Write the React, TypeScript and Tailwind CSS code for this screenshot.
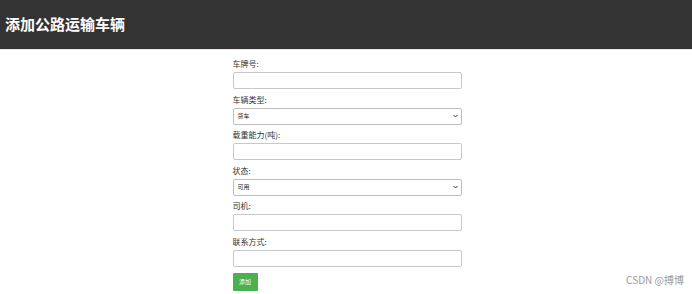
import React from "react";

const font = { fontFamily: '"Noto Sans CJK SC", "Noto Sans", sans-serif' };

function Label({ children }: { children: React.ReactNode }) {
  return (
    <div className="h-[10px] mb-[3px] text-[8px] leading-[10px] text-[#333]">{children}</div>
  );
}

function TextInput() {
  return (
    <input
      type="text"
      className="block w-full h-[17px] border border-[#c8c8c8] rounded-[2px] bg-white outline-none px-[3px] text-[7px]"
    />
  );
}

function Select({ options }: { options: string[] }) {
  return (
    <div className="relative">
      <select
        className="block w-full h-[17px] appearance-none border border-[#bdbdbd] rounded-[2px] bg-white text-[6px] leading-[8px] pl-[4px] text-[#222] outline-none"
        style={font}
      >
        {options.map((o) => (
          <option key={o}>{o}</option>
        ))}
      </select>
      <svg
        className="absolute right-[4px] top-[6px] pointer-events-none"
        width="5"
        height="4"
        viewBox="0 0 5 4"
      >
        <path d="M0.5 1 L2.5 3 L4.5 1" fill="none" stroke="#333" strokeWidth="1" />
      </svg>
    </div>
  );
}

export default function App() {
  return (
    <div className="relative w-[692px] h-[294px] bg-white overflow-hidden" style={font}>
      <div className="h-[50px] bg-[#333333] flex items-center pl-[5px] border-b border-[#e6e6e6]">
        <h1 className="text-white text-[15px] font-bold">添加公路运输车辆</h1>
      </div>
      <div className="flex justify-center pt-[9px]">
        <form className="w-[229px] ml-[2px] flex flex-col gap-[5.6px]">
          <div>
            <Label>车牌号:</Label>
            <TextInput />
          </div>
          <div>
            <Label>车辆类型:</Label>
            <Select options={["货车", "客车"]} />
          </div>
          <div>
            <Label>载重能力(吨):</Label>
            <TextInput />
          </div>
          <div>
            <Label>状态:</Label>
            <Select options={["可用", "不可用"]} />
          </div>
          <div>
            <Label>司机:</Label>
            <TextInput />
          </div>
          <div>
            <Label>联系方式:</Label>
            <TextInput />
          </div>
          <div className="flex">
            <button
              type="button"
              className="block w-[25px] h-[18px] bg-[#4caf50] text-white text-[6px] leading-[18px] rounded-[1px]"
            >
              添加
            </button>
          </div>
        </form>
      </div>
      <div className="absolute right-[8px] bottom-[7px] text-[10px] text-[#9a9a9a]">CSDN @搏博</div>
    </div>
  );
}
